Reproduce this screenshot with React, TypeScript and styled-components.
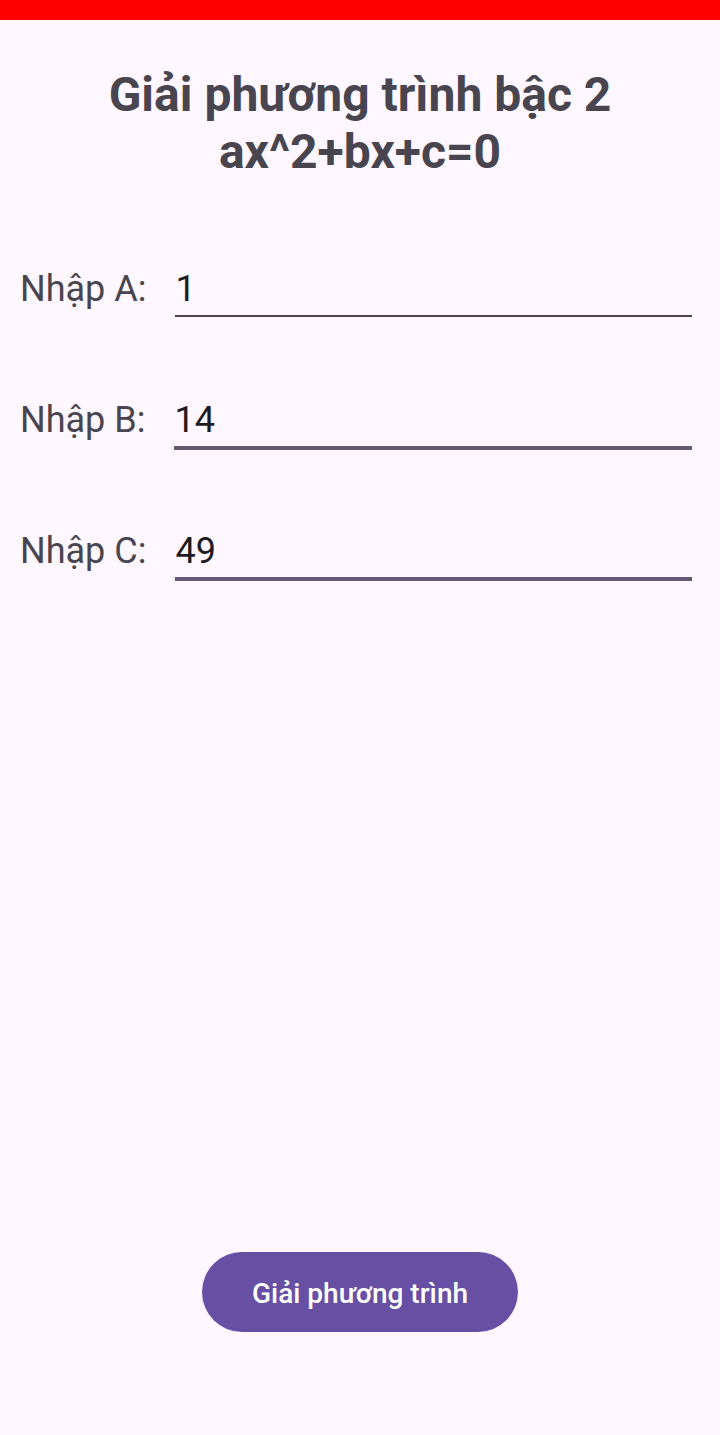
import React from "react";
import styled, { createGlobalStyle } from "styled-components";

const GlobalStyle = createGlobalStyle`
  *, *::before, *::after { box-sizing: border-box; }
  body {
    margin: 0;
    background: #fef7ff;
    font-family: Roboto, "Noto Sans", sans-serif;
  }
`;

const Screen = styled.div`
  min-height: 100vh;
  display: flex;
  flex-direction: column;
  background: #fef7ff;
`;

const StatusStrip = styled.header`
  height: 20px;
  flex: none;
  background: #ff0000;
`;

const Form = styled.form`
  flex: 1;
  display: flex;
  flex-direction: column;
  padding: 46px 20px 103px;
`;

const Title = styled.h1`
  margin: 0 0 69px;
  color: #49454f;
  font-size: 48px;
  line-height: 57px;
  font-weight: 700;
  text-align: center;
`;

const Fields = styled.div`
  display: flex;
  flex-direction: column;
  gap: 61px;
`;

const Field = styled.div`
  height: 70px;
  padding-right: 8px;
  display: flex;
  align-items: flex-start;
  gap: 29px;
`;

const Label = styled.label`
  color: #49454f;
  font-size: 36px;
  line-height: 42px;
  padding-top: 19px;
`;

const NumberInput = styled.input<{ $strong?: boolean }>`
  flex: 1;
  min-width: 0;
  height: ${(p) => (p.$strong ? 70 : 68)}px;
  margin: 0;
  padding: 18px 0 5px;
  border: 0;
  border-bottom: ${(p) => (p.$strong ? "4px solid #625b71" : "2px solid #49454f")};
  border-radius: 0;
  outline: none;
  background: transparent;
  color: #1d1b20;
  font-family: inherit;
  font-size: 36px;
  line-height: 42px;
`;

const SolveButton = styled.button`
  align-self: center;
  margin-top: auto;
  height: 80px;
  padding: 2px 50px 0;
  border: 0;
  border-radius: 40px;
  background: #6750a4;
  color: #ffffff;
  font-family: inherit;
  font-size: 28px;
  font-weight: 500;
  cursor: pointer;
`;

const coefficients = [
  { name: "A", value: "1", strong: false },
  { name: "B", value: "14", strong: true },
  { name: "C", value: "49", strong: true },
];

export default function App() {
  return (
    <>
      <GlobalStyle />
      <Screen>
        <StatusStrip />
        <Form onSubmit={(e: React.FormEvent) => e.preventDefault()}>
          <Title>
            Giải phương trình bậc 2<br />
            ax^2+bx+c=0
          </Title>
          <Fields>
            {coefficients.map((c) => (
              <Field key={c.name}>
                <Label htmlFor={`coef-${c.name}`}>Nhập {c.name}:</Label>
                <NumberInput
                  id={`coef-${c.name}`}
                  inputMode="numeric"
                  defaultValue={c.value}
                  $strong={c.strong}
                />
              </Field>
            ))}
          </Fields>
          <SolveButton type="submit">Giải phương trình</SolveButton>
        </Form>
      </Screen>
    </>
  );
}
